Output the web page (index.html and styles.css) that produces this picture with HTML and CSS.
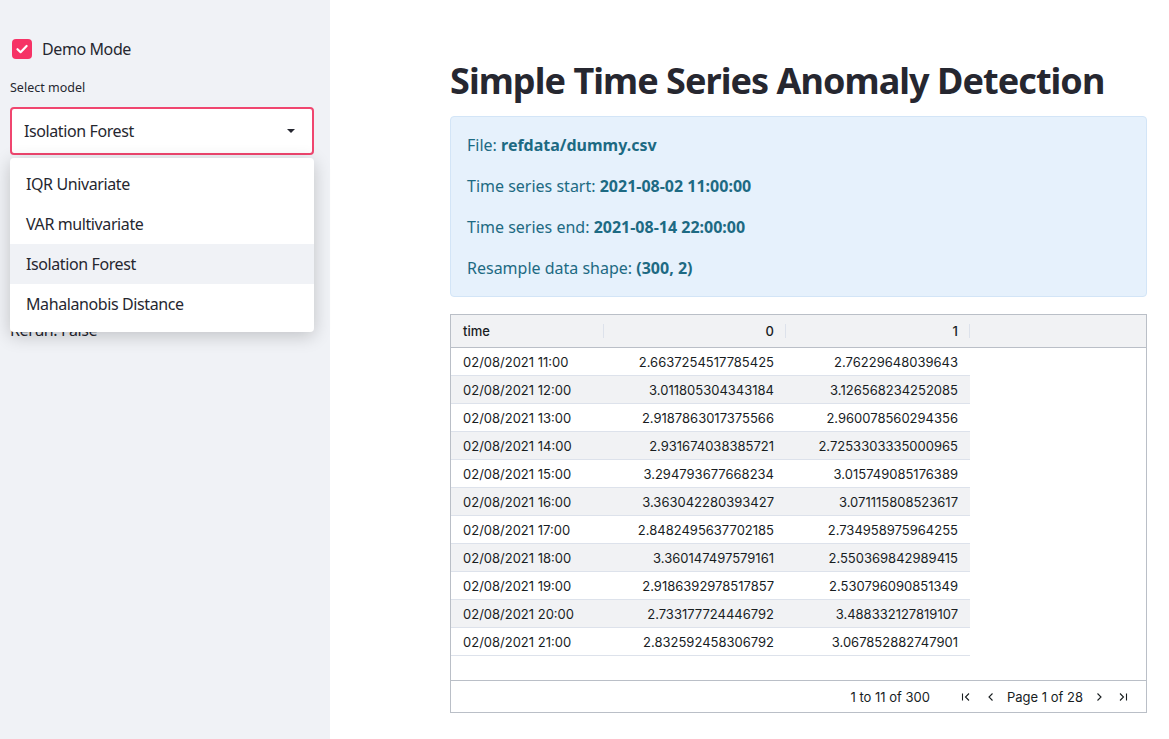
FILE: index.html
```html
<!DOCTYPE html>
<html>
<head>
<meta charset="utf-8">
<link rel="stylesheet" href="styles.css">
</head>
<body>
<div class="app">
  <aside class="sidebar">
    <label class="checkbox">
      <span class="box"><svg width="20" height="20" viewBox="0 0 20 20"><path d="M5.5 10.2 L8.6 13.2 L14.6 7" fill="none" stroke="#fff" stroke-width="2.2" stroke-linecap="round" stroke-linejoin="round"/></svg></span>
      <span class="check-label">Demo Mode</span>
    </label>
    <div class="field-label">Select model</div>
    <div class="select-wrap">
      <div class="select">
        <span>Isolation Forest</span>
        <svg class="caret" width="10" height="6" viewBox="0 0 10 6"><path d="M1 1 L9 1 L5 5 Z" fill="#262730"/></svg>
      </div>
      <ul class="menu">
        <li>IQR Univariate</li>
        <li>VAR multivariate</li>
        <li class="active">Isolation Forest</li>
        <li>Mahalanobis Distance</li>
      </ul>
    </div>
    <p class="rerun">Rerun: False</p>
  </aside>
  <main class="main">
    <div class="block">
      <h1 class="title">Simple Time Series Anomaly Detection</h1>
      <div class="info">
        <p>File: <b>refdata/dummy.csv</b></p>
        <p>Time series start: <b>2021-08-02 11:00:00</b></p>
        <p>Time series end: <b>2021-08-14 22:00:00</b></p>
        <p>Resample data shape: <b>(300, 2)</b></p>
      </div>
      <div class="grid">
        <div class="grid-head">
          <div class="hcell c-time">time</div>
          <div class="hcell c-num">0</div>
          <div class="hcell c-num">1</div>
        </div>
        <div class="grid-body">
          <div class="row"><div class="cell c-time">02/08/2021 11:00</div><div class="cell c-num">2.6637254517785425</div><div class="cell c-num">2.76229648039643</div></div>
          <div class="row odd"><div class="cell c-time">02/08/2021 12:00</div><div class="cell c-num">3.011805304343184</div><div class="cell c-num">3.126568234252085</div></div>
          <div class="row"><div class="cell c-time">02/08/2021 13:00</div><div class="cell c-num">2.9187863017375566</div><div class="cell c-num">2.960078560294356</div></div>
          <div class="row odd"><div class="cell c-time">02/08/2021 14:00</div><div class="cell c-num">2.931674038385721</div><div class="cell c-num">2.7253303335000965</div></div>
          <div class="row"><div class="cell c-time">02/08/2021 15:00</div><div class="cell c-num">3.294793677668234</div><div class="cell c-num">3.015749085176389</div></div>
          <div class="row odd"><div class="cell c-time">02/08/2021 16:00</div><div class="cell c-num">3.363042280393427</div><div class="cell c-num">3.071115808523617</div></div>
          <div class="row"><div class="cell c-time">02/08/2021 17:00</div><div class="cell c-num">2.8482495637702185</div><div class="cell c-num">2.734958975964255</div></div>
          <div class="row odd"><div class="cell c-time">02/08/2021 18:00</div><div class="cell c-num">3.360147497579161</div><div class="cell c-num">2.550369842989415</div></div>
          <div class="row"><div class="cell c-time">02/08/2021 19:00</div><div class="cell c-num">2.9186392978517857</div><div class="cell c-num">2.530796090851349</div></div>
          <div class="row odd"><div class="cell c-time">02/08/2021 20:00</div><div class="cell c-num">2.733177724446792</div><div class="cell c-num">3.488332127819107</div></div>
          <div class="row"><div class="cell c-time">02/08/2021 21:00</div><div class="cell c-num">2.832592458306792</div><div class="cell c-num">3.067852882747901</div></div>
        </div>
        <div class="pager">
          <span class="pager-summary">1 to 11 of 300</span>
          <span class="pbtn first"><svg width="10" height="10" viewBox="0 0 10 10"><path d="M1.5 1.5 V8.5 M8 1.5 L4.5 5 L8 8.5" fill="none" stroke="#181d1f" stroke-width="1.1"/></svg></span>
          <span class="pbtn prev"><svg width="10" height="10" viewBox="0 0 10 10"><path d="M6.5 1.5 L3 5 L6.5 8.5" fill="none" stroke="#181d1f" stroke-width="1.1"/></svg></span>
          <span class="pager-text">Page 1 of 28</span>
          <span class="pbtn next"><svg width="10" height="10" viewBox="0 0 10 10"><path d="M3.5 1.5 L7 5 L3.5 8.5" fill="none" stroke="#181d1f" stroke-width="1.1"/></svg></span>
          <span class="pbtn last"><svg width="10" height="10" viewBox="0 0 10 10"><path d="M2 1.5 L5.5 5 L2 8.5 M8.5 1.5 V8.5" fill="none" stroke="#181d1f" stroke-width="1.1"/></svg></span>
        </div>
      </div>
    </div>
  </main>
</div>
</body>
</html>
```

FILE: styles.css
```css
* { box-sizing: border-box; }
html, body { margin: 0; padding: 0; }
body {
  font-family: "Noto Sans", "Open Sans", sans-serif;
  color: #262730;
  background: #fff;
}
.app {
  display: flex;
  width: 1169px;
  height: 739px;
  overflow: hidden;
}
.sidebar {
  width: 330px;
  flex: none;
  background: #f0f2f6;
  padding: 39px 16px 0 10px;
  letter-spacing: -0.4px;
}
.checkbox {
  display: flex;
  align-items: center;
  margin-left: 2px;
  height: 20px;
}
.box {
  width: 20px;
  height: 20px;
  border-radius: 4px;
  background: #f63366;
  display: block;
}
.box svg { display: block; }
.check-label {
  margin-left: 10px;
  font-size: 16px;
}
.field-label {
  margin-top: 21px;
  font-size: 12.5px;
  line-height: 16px;
  letter-spacing: 0;
}
.select-wrap {
  position: relative;
  margin-top: 11px;
}
.select {
  height: 48px;
  border: 2px solid #f0466f;
  border-radius: 4px;
  background: #fff;
  display: flex;
  align-items: center;
  justify-content: space-between;
  padding: 0 16px 0 12px;
  font-size: 16px;
}
.caret { display: block; }
.menu {
  position: absolute;
  left: 0;
  right: 0;
  top: 51px;
  margin: 0;
  padding: 6px 0 8px;
  list-style: none;
  background: #fff;
  border-radius: 4px;
  box-shadow: 0 4px 18px rgba(0,0,0,0.2);
  z-index: 2;
}
.menu li {
  height: 40px;
  line-height: 40px;
  padding-left: 16px;
  font-size: 16px;
}
.menu li.active { background: #f0f2f6; }
.rerun {
  margin: 163px 0 0;
  font-size: 16px;
  line-height: 24px;
}
.main {
  flex: 1;
  padding: 57px 22px 0 120px;
}
.title {
  margin: 0;
  font-size: 36px;
  line-height: 48px;
  font-weight: 700;
  letter-spacing: -0.95px;
  color: #262730;
}
.info {
  margin-top: 11px;
  background: #e6f1fc;
  border: 1px solid #d3e5f7;
  border-radius: 4px;
  padding: 16px;
  color: #1d6a83;
}
.info p {
  margin: 0 0 17px;
  font-size: 16px;
  line-height: 24px;
}
.info p:last-child { margin-bottom: 0; }
.info b { font-weight: 700; }
.grid {
  margin-top: 17px;
  height: 399px;
  border: 1px solid #babfc7;
  display: flex;
  flex-direction: column;
  font-family: "Inter", "Liberation Sans", sans-serif;
  font-size: 13px;
  color: #181d1f;
}
.grid-head {
  height: 33px;
  background: #f1f2f4;
  border-bottom: 1px solid #babfc7;
  display: flex;
  align-items: center;
  font-weight: 500;
}
.c-time { width: 153px; }
.c-num { width: 182px; text-align: right; }
.c-num + .c-num { width: 184px; }
.hcell {
  height: 100%;
  display: flex;
  align-items: center;
  padding: 0 12px;
  position: relative;
}
.hcell.c-num { justify-content: flex-end; }
.hcell::after {
  content: "";
  position: absolute;
  right: 0;
  top: 9px;
  height: 14px;
  width: 1px;
  background: #dde2eb;
}
.grid-body { flex: 1; }
.row {
  display: flex;
  height: 28px;
  width: 519px;
  border-bottom: 1px solid #dde2eb;
}
.row.odd { background: #f1f2f4; }
.cell {
  line-height: 27px;
  padding: 1px 12px 0;
  white-space: nowrap;
}
.pager {
  height: 32px;
  border-top: 1px solid #babfc7;
  display: flex;
  align-items: center;
  justify-content: flex-end;
  padding-right: 18px;
}
.pbtn {
  width: 10px;
  height: 10px;
  display: block;
}
.pbtn svg { display: block; }
.pbtn.first { margin-left: 31px; }
.pbtn.prev { margin-left: 15px; }
.pbtn.last { margin-left: 14px; }
.pager-text { margin: 0 11px; }
```
